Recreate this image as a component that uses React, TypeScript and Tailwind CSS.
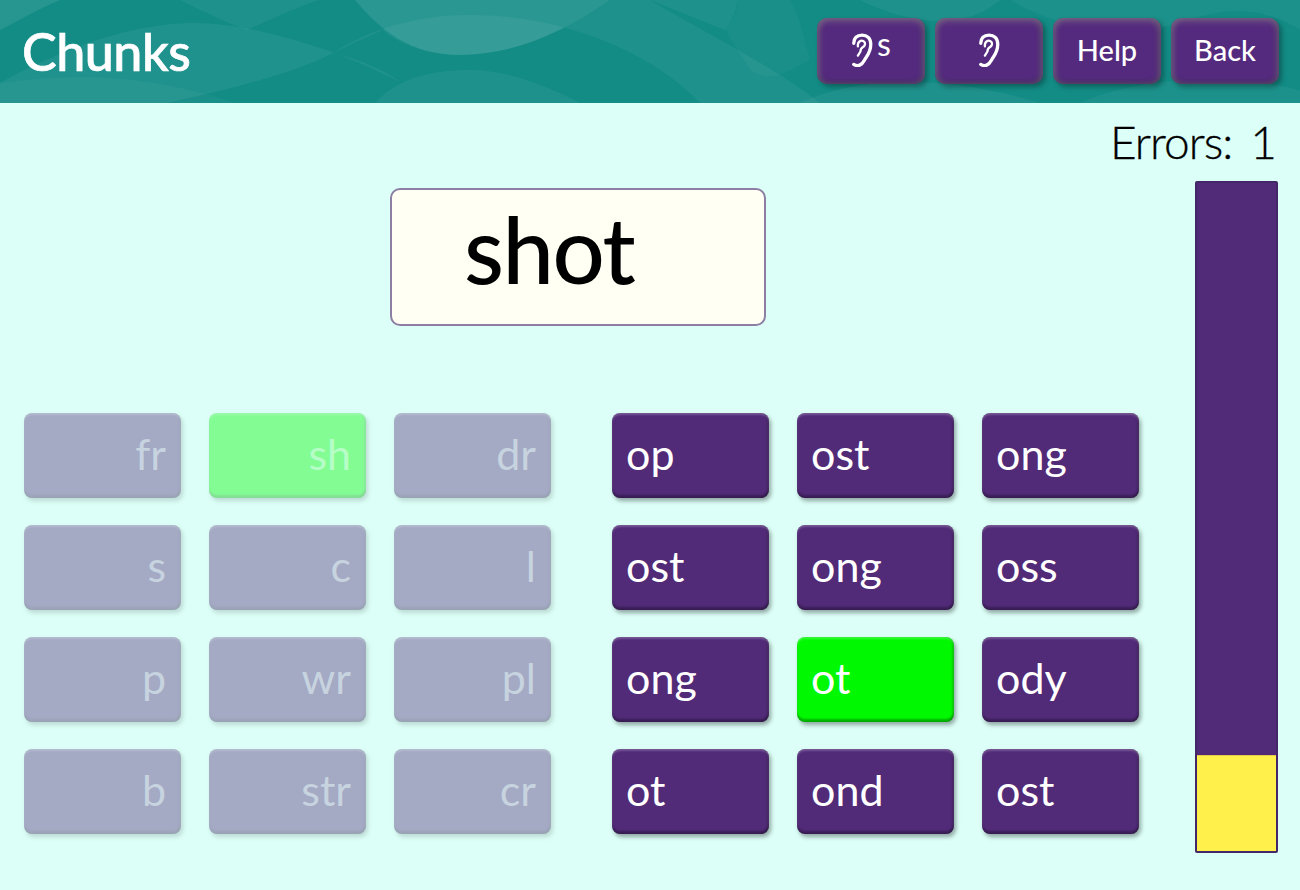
const leftTiles = [
  ["fr", "sh", "dr"],
  ["s", "c", "l"],
  ["p", "wr", "pl"],
  ["b", "str", "cr"],
];

const rightTiles = [
  ["op", "ost", "ong"],
  ["ost", "ong", "oss"],
  ["ong", "ot", "ody"],
  ["ot", "ond", "ost"],
];

function Ear() {
  return (
    <svg width="22" height="34" viewBox="0 0 20 33" fill="none" stroke="white" strokeLinecap="round">
      <path
        d="M2 30.5C6 33 10 31 12 27C14 22.5 18.500 20 18.500 11C18.500 5 15 2 10 2C5 2 2 5 2 10"
        strokeWidth="3.2"
      />
      <path d="M6 13C5.500 8.500 9 6.500 11.500 8C14 9.500 13 12.500 11 13.500C9 14.500 8.500 16 8.500 18L6 22" strokeWidth="2.2" />
    </svg>
  );
}

function TopButton({ children }: { children: React.ReactNode }) {
  return (
    <button className="flex h-[66px] w-[108px] items-center justify-center rounded-[10px] bg-[#542a7e] pb-[2px] text-[29px] font-medium text-white shadow-[inset_0_4px_6px_rgba(170,180,150,0.3),inset_0_-3px_5px_rgba(50,60,50,0.28),inset_4px_0_5px_rgba(150,160,130,0.22),inset_-4px_0_5px_rgba(100,110,90,0.25),3px_3px_5px_rgba(0,0,0,0.3)]">
      {children}
    </button>
  );
}

function Tile({ label, green, faded }: { label: string; green?: boolean; faded?: boolean }) {
  return (
    <div
      className={`flex h-[85px] w-[157px] items-center rounded-[8px] pb-[2px] pl-[14px] pr-[15px] text-[43px] shadow-[inset_0_2px_2px_rgba(255,255,255,0.22),inset_0_-3px_2px_rgba(0,0,0,0.28),inset_-2px_0_2px_rgba(0,0,0,0.16),2px_3px_4px_rgba(0,0,0,0.35)] ${
        green ? "bg-[#00f900]" : "bg-[#512a78]"
      } ${faded ? "justify-end text-white/50 opacity-40" : "text-white"}`}
    >
      {label}
    </div>
  );
}

function TileGrid({ rows, faded, greenIndex }: { rows: string[][]; faded?: boolean; greenIndex: number }) {
  return (
    <div className="grid grid-cols-[157px_157px_157px] gap-x-[28px] gap-y-[27px]">
      {rows.flat().map((label, i) => (
        <Tile key={i} label={label} faded={faded} green={i === greenIndex} />
      ))}
    </div>
  );
}

export default function App() {
  return (
    <div className="flex h-[890px] w-[1300px] flex-col overflow-hidden bg-[#dcfff8] font-['Lato',sans-serif] text-black">
      <header className="relative flex h-[103px] items-center justify-between overflow-hidden bg-[#138c86] pb-[1px] pl-[22px] pr-[21px]">
        <svg className="absolute inset-0" width="1300" height="103" viewBox="0 0 1300 103">
          <g fill="white">
            <path opacity="0.09" d="M0 30C20 20 40 8 60 0H0Z" />
            <path opacity="0.06" d="M0 83C70 45 130 25 190 23C250 22 340 50 400 82C385 70 360 60 333 53C300 70 250 85 167 103H0Z" />
            <path opacity="0.03" d="M0 83C80 72 150 75 235 103H0Z" />
            <path opacity="0.05" d="M247 30C280 15 315 0 320 0H180C200 10 225 22 247 30Z" />
            <path opacity="0.1" d="M355 0C380 30 410 55 460 55C510 55 560 35 610 0Z" />
            <path opacity="0.05" d="M333 53C350 45 365 38 383 30C400 45 430 55 460 55C510 55 560 35 610 0H650C700 30 780 70 820 103H700C650 50 560 15 470 15C420 15 370 28 333 53Z" />
            <path opacity="0.05" d="M375 103C400 75 440 70 470 70C510 70 550 88 580 103Z" />
            <path opacity="0.05" d="M725 30C732 20 736 10 738 0H650Z" />
            <path opacity="0.03" d="M790 0C800 15 800 25 810 60C790 70 770 85 750 70L725 30C735 15 738 10 738 0Z" />
            <path opacity="0.05" d="M800 103C850 80 930 70 1040 103Z" />
            <path opacity="0.05" d="M860 0C900 20 960 35 1000 0Z" />
            <path opacity="0.04" d="M1010 0C1060 30 1130 40 1190 20C1230 5 1270 10 1300 30V0Z" />
            <path opacity="0.04" d="M1080 103C1130 80 1220 70 1300 90V103Z" />
          </g>
        </svg>
        <h1 className="relative text-[52px] font-medium leading-none tracking-[-0.5px] text-white [-webkit-text-stroke:0.7px_white]">
          Chunks
        </h1>
        <nav className="relative flex gap-[10px]">
          <TopButton>
            <span className="flex items-start">
              <Ear />
              <span className="ml-[4px] text-[32px] font-normal leading-[22px]">s</span>
            </span>
          </TopButton>
          <TopButton>
            <Ear />
          </TopButton>
          <TopButton>Help</TopButton>
          <TopButton>Back</TopButton>
        </nav>
      </header>

      <main className="flex flex-1 pl-[24px] pr-[22px]">
        <section className="flex w-[1116px] flex-col">
          <div className="ml-[366px] mt-[85px] flex h-[138px] w-[376px] items-center rounded-[10px] border-2 border-[#8c7fa3] bg-[#fffff3] pb-[16px] pl-[72px] text-[92px] font-medium tracking-[-1.5px]">
            shot
          </div>
          <div className="mt-[87px] flex gap-[61px]">
            <TileGrid rows={leftTiles} faded greenIndex={1} />
            <TileGrid rows={rightTiles} greenIndex={7} />
          </div>
        </section>

        <aside className="flex min-w-0 flex-1 flex-col items-end">
          <p className="mt-[11px] h-[67px] whitespace-nowrap pr-[2px] text-[46px] font-light leading-[56px] tracking-[-1px] [-webkit-text-stroke:0.3px_black]">
            Errors:<span className="ml-[18px]">1</span>
          </p>
          <div className="flex h-[672px] w-[83px] flex-col overflow-hidden rounded-[2px] border-2 border-[#432768] bg-[#512a78]">
            <div className="flex-1" />
            <div className="h-[96px] border-t border-[#e8c94a] bg-[#fff04c]" />
          </div>
        </aside>
      </main>
    </div>
  );
}
